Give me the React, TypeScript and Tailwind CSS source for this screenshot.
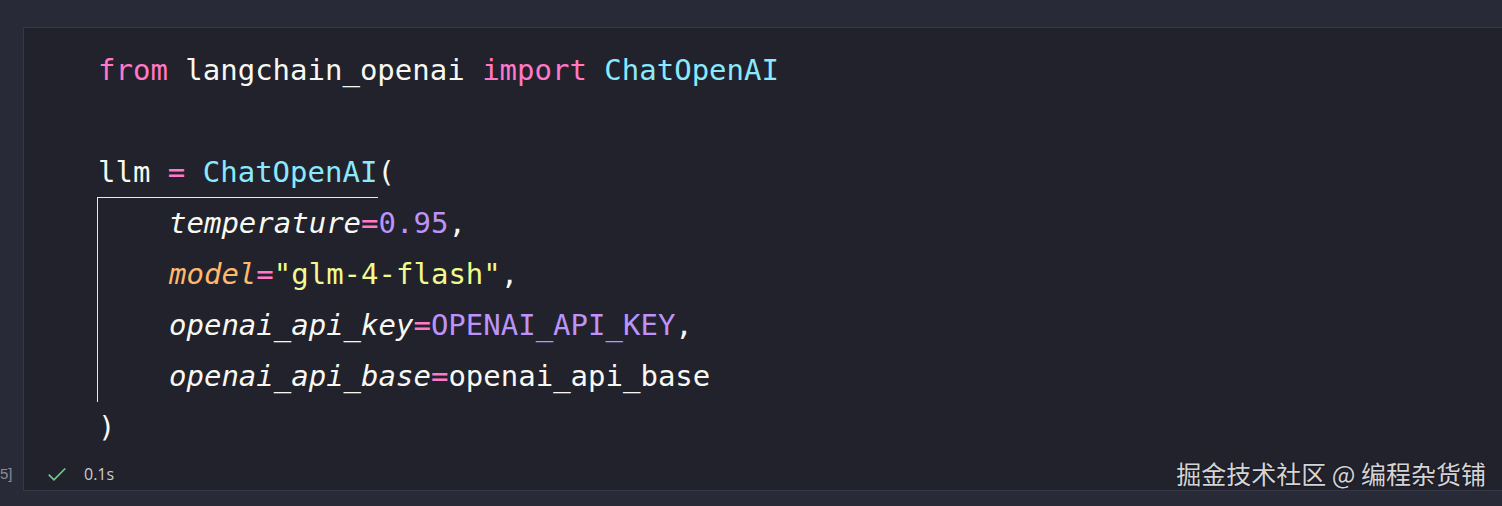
import React from 'react';

const mono = "font-['DejaVu_Sans_Mono','Liberation_Mono',monospace] text-[29px] leading-[51px] whitespace-pre";

const Line = ({ children }: any) => <div className="h-[51px]">{children}</div>;

export default function App() {
    return (
        <div className="w-[1502px] h-[506px] bg-[#282a37] pt-[27px] overflow-hidden">
            <div className="flex h-[464px]">
                {/* gutter */}
                <div className="w-[23px] shrink-0 flex flex-col justify-end pb-[6px]">
                    <span className="font-['Liberation_Sans',sans-serif] text-[15px] text-[#8b8d98]">5]</span>
                </div>

                {/* cell */}
                <div className="flex-1 bg-[#21222c] border-t border-l border-b border-[#363846] flex flex-col">
                    <div className={`${mono} text-[#f8f8f2] pl-[74px] pt-[17px]`}>
                        <Line>
                            <span className="text-[#ff79c6]">from</span> langchain_openai <span className="text-[#ff79c6]">import</span> <span className="text-[#8be9fd]">ChatOpenAI</span>
                        </Line>
                        <Line>{' '}</Line>
                        <Line>
                            llm <span className="text-[#ff79c6]">=</span> <span className="text-[#8be9fd]">ChatOpenAI</span><span className="text-[#f8f8f2]">(</span>
                        </Line>
                        <div className="w-[281px] -ml-px border-t border-l border-[#e8e8e8] -mt-px">
                            <div className="pl-[71px] w-[900px]">
                                <Line>
                                    <span className="italic">temperature</span><span className="text-[#ff79c6]">=</span><span className="text-[#bd93f9]">0.95</span>,
                                </Line>
                                <Line>
                                    <span className="italic text-[#ffb86c]">model</span><span className="text-[#ff79c6]">=</span><span className="text-[#f1fa8c]">"glm-4-flash"</span>,
                                </Line>
                                <Line>
                                    <span className="italic">openai_api_key</span><span className="text-[#ff79c6]">=</span><span className="text-[#bd93f9]">OPENAI_API_KEY</span>,
                                </Line>
                                <Line>
                                    <span className="italic">openai_api_base</span><span className="text-[#ff79c6]">=</span>openai_api_base
                                </Line>
                            </div>
                        </div>
                        <Line>)</Line>
                    </div>

                    {/* status row */}
                    <div className="mt-auto h-[36px] flex items-center pl-[22px] pr-[16px] pt-[3px]">
                        <svg width="22" height="22" viewBox="0 0 16 16" fill="none" stroke="#73c991" strokeWidth="1.2">
                            <path d="M2 8.5 L5.8 12.3 L14 4" />
                        </svg>
                        <span className="ml-[16px] font-['Open_Sans','Liberation_Sans',sans-serif] text-[16px] text-[#cccccc]">0.1s</span>
                        <span className="ml-auto font-['Noto_Sans_CJK_SC',sans-serif] text-[25px] text-[#d4d4d6] [text-shadow:0_0_2px_rgba(0,0,0,0.6)]">
                            掘金技术社区 @ 编程杂货铺
                        </span>
                    </div>
                </div>
            </div>
        </div>
    );
}
